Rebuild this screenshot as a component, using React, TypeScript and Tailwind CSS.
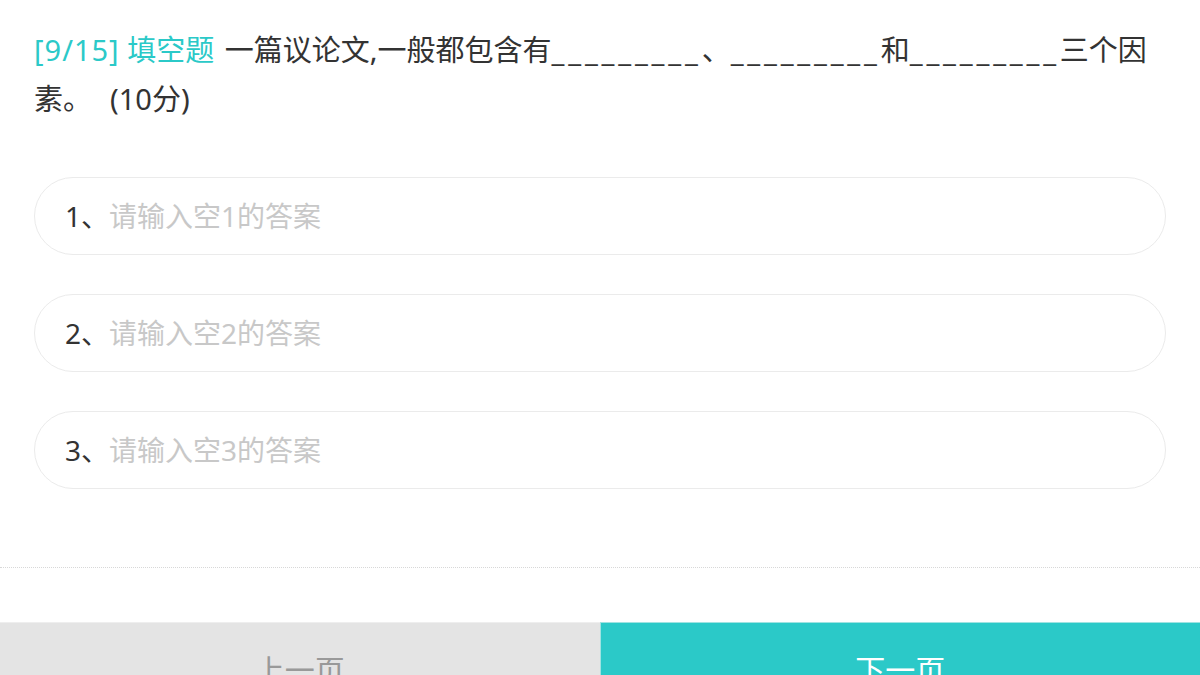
import React from 'react'

const blanks = [1, 2, 3]

export default function App() {
  return (
    <div className="w-[1200px] h-[675px] overflow-hidden bg-white flex flex-col" style={{ fontFamily: '"Noto Sans", "Noto Sans CJK SC", sans-serif' }}>
      {/* 题干 */}
      <div className="px-[34px] pt-[25px] text-[29px] leading-[49px] text-[#333]">
        <span className="text-[#2bc9c8]"><span className="tracking-[1px]">[9/15]</span> <span className="mr-[3px]">填空题</span> </span>
        一篇议论文,一般都包含有<span className="tracking-[3.8px]">_________</span>、<span className="tracking-[3.8px]">_________</span>和<span className="tracking-[3.8px]">_________</span>三个因素。<span className="ml-[18px]">(10分)</span>
      </div>

      {/* 填空输入框 */}
      <div className="px-[34px] pt-[54px] flex flex-col gap-[39px]">
        {blanks.map(n => (
          <div key={n} className="h-[78px] rounded-full border border-[#ebebeb] flex items-center pl-[30px] pr-6">
            <span className="text-[28px] text-[#333]">{n}、</span>
            <input
              className="flex-1 outline-none bg-transparent text-[28px] text-[#333] placeholder:text-[#c8c8c8]"
              placeholder={`请输入空${n}的答案`}
            />
          </div>
        ))}
      </div>

      <div className="mt-[78px] border-t border-dotted border-[#d8d8d8]" />

      {/* 翻页按钮 */}
      <div className="mt-[54px] flex h-[100px] shrink-0">
        <button className="flex-1 bg-[#e4e4e4] border-t border-[#eeeeee] text-[30px] text-[#999] flex items-start justify-center pt-[24px]">
          上一页
        </button>
        <button className="flex-1 bg-[#2bc9c8] border-t border-l border-[#9fe3e2] text-[30px] text-white flex items-start justify-center pt-[24px]">
          下一页
        </button>
      </div>
    </div>
  )
}
